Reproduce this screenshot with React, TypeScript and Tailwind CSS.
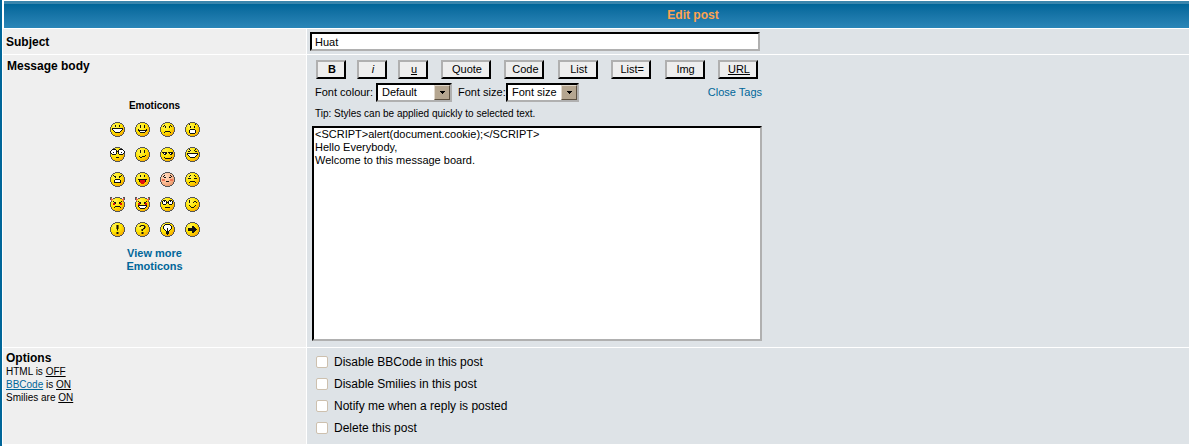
import React, { useState } from "react";

const INK: Record<string, string> = {
  K: "#111111",
  W: "#ffffff",
  R: "#e01010",
  G: "#555555",
  D: "#8a7000",
  P: "#f07858",
  O: "#e8604a",
};

const OUTLINE: string[] = [
  ".....GGGGG.....",
  "...GG.....GG...",
  "..G.........G..",
  ".G...........G.",
  ".G...........G.",
  "G.............G",
  "G.............G",
  "G.............G",
  "G.............G",
  "G.............G",
  ".G...........G.",
  ".G...........G.",
  "..G.........G..",
  "...GG.....GG...",
  ".....GGGGG.....",
];

type Face = { name: string; top: number; rows: string[]; blush?: boolean };

const FACES: Face[] = [
  { name: "Very Happy", top: 3, rows: [
    ".....K...K.....",
    ".....K...K.....",
    "...............",
    "..KKKKKKKKKKK..",
    "..KWWWWWWWWWK..",
    "...KWWWWWWWK...",
    "....KWWWWWK....",
    ".....KKKKK.....",
  ] },
  { name: "Smile", top: 3, rows: [
    ".....K...K.....",
    ".....K...K.....",
    ".....K...K.....",
    "...............",
    "...K.......K...",
    "...KKKKKKKKK...",
    "....KWWWWWK....",
    ".....KKKKK.....",
  ] },
  { name: "Sad", top: 3, rows: [
    "....K.....K....",
    "...K.K...K.K...",
    ".....K...K.....",
    "...............",
    "...............",
    "...............",
    ".....KKKKK.....",
    "....K.....K....",
  ] },
  { name: "Surprised", top: 2, rows: [
    "....K.....K....",
    "...............",
    ".....K...K.....",
    ".....K...K.....",
    "...............",
    ".....KKKKK.....",
    "....KWWWWWK....",
    "....KWWWWWK....",
    "....KWWWWWK....",
    ".....KKKKK.....",
  ] },
  { name: "Shocked", top: 2, rows: [
    "..KKKK...KKKK..",
    ".KWWWWK.KWWWWK.",
    "KWWWWWKKKWWWWWK",
    "KWWKWWK.KWWKWWK",
    ".KWWWWK.KWWWWK.",
    "..KKKK...KKKK..",
    "...............",
    "...............",
    "......KKK......",
  ] },
  { name: "Confused", top: 3, rows: [
    ".....K...K.....",
    ".....K...K.....",
    ".....K...K.....",
    "...............",
    "...............",
    "..........K....",
    "....K..KKK.....",
    ".....KK........",
  ] },
  { name: "Cool", top: 5, rows: [
    "..KKKKK.KKKKK..",
    "...KWKK..KWKK..",
    "....KK....KK...",
    "...............",
    "...............",
    "....K......K...",
    ".....KKKKKK....",
  ] },
  { name: "Laughing", top: 2, rows: [
    "....K.....K....",
    ".....K...K.....",
    "...KK.....KK...",
    "...............",
    "..KKKKKKKKKKK..",
    "..KWWWWWWWWWK..",
    "...KWWWWWWWK...",
    "....KWWWWWK....",
    ".....KKKKK.....",
  ] },
  { name: "Mad", top: 3, rows: [
    "...K.......K...",
    "....KK...KK....",
    ".....K...K.....",
    "...............",
    ".....KKKKK.....",
    "....KWWWWWK....",
    "....KWWWWWK....",
    "....KKKKKKK....",
  ] },
  { name: "Razz", top: 3, rows: [
    ".....K...K.....",
    ".....K...K.....",
    "...............",
    "...............",
    "...KKKKKKKKK...",
    "....KRRRRRK....",
    "....KRRRRRK....",
    ".....RRRRR.....",
    "......RRR......",
  ] },
  { name: "Embarrassed", top: 3, blush: true, rows: [
    "....K.....K....",
    "...K.......K...",
    "....KK...KK....",
    "...............",
    "..PPP.....PPP..",
    "..PPP.....PPP..",
    "......KKK......",
  ] },
  { name: "Crying or Very sad", top: 3, rows: [
    ".....K...K.....",
    "....K.....K....",
    "...............",
    "...KKK...KKK...",
    "...............",
    "...............",
    ".....KKKKK.....",
    "....K.....K....",
  ] },
  { name: "Evil or Very Mad", top: 0, rows: [
    "GG...........GG",
    "GO...........OG",
    "GOO.........OOG",
    ".O...........O.",
    "...K.......K...",
    "....KK...KK....",
    "...RRK...KRR...",
    "...RR.....RR...",
    "...............",
    ".....KKKKK.....",
    "....K.....K....",
  ] },
  { name: "Twisted Evil", top: 0, rows: [
    "GG...........GG",
    "GO...........OG",
    "GOO.........OOG",
    ".O...........O.",
    "...K.......K...",
    "....KK...KK....",
    "...RRK...KRR...",
    "...RR.....RR...",
    "...KKKKKKKKK...",
    "...KWWWWWWWK...",
    "....KWWWWWK....",
    ".....KKKKK.....",
  ] },
  { name: "Rolling Eyes", top: 3, rows: [
    "...KKK...KKK...",
    "..KWKWK.KWKWK..",
    "..KWWWKKKWWWK..",
    "..KWWWK.KWWWK..",
    "...KKK...KKK...",
    "...............",
    "...............",
    ".....KKKKK.....",
  ] },
  { name: "Wink", top: 3, rows: [
    "....K..........",
    "....K....KK....",
    "....K...K..K...",
    "...............",
    "...............",
    "....K.....K....",
    ".....K...K.....",
    "......KKK......",
  ] },
  { name: "Exclamation", top: 3, rows: [
    "......DKD......",
    "......DKD......",
    "......DKD......",
    "......DKD......",
    ".......K.......",
    ".......D.......",
    "...............",
    "......DKD......",
    "......DKD......",
  ] },
  { name: "Question", top: 3, rows: [
    ".....DKKKD.....",
    "....DK...KD....",
    ".........KD....",
    "........KK.....",
    "......DKD......",
    "......DK.......",
    "...............",
    "......DKD......",
    "......DKD......",
  ] },
  { name: "Idea", top: 2, rows: [
    ".....KKKKK.....",
    "....KWWWWWK....",
    "...KWWWWWWWK...",
    "...KWWWWWWWK...",
    "...KWWWKWWWK...",
    "....KWWKWWK....",
    ".....KWKWK.....",
    "......KKK......",
    "......KKK......",
    "......KKK......",
    ".......K.......",
  ] },
  { name: "Arrow", top: 4, rows: [
    ".......KK......",
    ".......KKK.....",
    "...KKKKKKKK....",
    "...KKKKKKKKK...",
    "...KKKKKKKK....",
    ".......KKK.....",
    ".......KK......",
  ] },
];

function pixels(rows: string[], top: number) {
  return rows.flatMap((row, y) =>
    row.split("").map((c, x) =>
      c === "." ? null : (
        <rect key={`${x}-${y}`} x={x} y={y + top} width="1" height="1" fill={INK[c]} />
      ),
    ),
  );
}

function Smiley({ face }: { face: Face }) {
  return (
    <svg
      viewBox="0 0 15 15"
      className="block size-[15px]"
      shapeRendering="crispEdges"
      aria-hidden="true"
    >
      <path
        d="M5 0h5v1h2v1h1v1h1v2h1v5h-1v2h-1v1h-1v1h-2v1h-5v-1h-2v-1h-1v-1h-1v-2h-1v-5h1v-2h1v-1h1v-1h2z"
        fill={face.blush ? "url(#skin)" : "url(#sun)"}
      />
      {pixels(OUTLINE, 0)}
      {pixels(face.rows, face.top)}
    </svg>
  );
}

const SUNKEN = "border-2 border-t-black border-l-black border-r-[#b0b0b0] border-b-[#b0b0b0] bg-white";

function TagButton({ label, className }: { label: string; className: string }) {
  return (
    <button
      type="button"
      className={`h-[19px] border-2 border-t-[#b0b0b0] border-l-[#b0b0b0] border-r-black border-b-black bg-[#eeeeee] pl-[2px] text-center text-[11px] leading-[15px] ${className}`}
    >
      {label}
    </button>
  );
}

function Picker({ id, options, className }: { id: string; options: string[]; className: string }) {
  return (
    <span className={`relative inline-block h-[19px] ${className}`}>
      <select
        id={id}
        className={`block h-[19px] w-full appearance-none pl-1 text-[11px] leading-[15px] outline-none ${SUNKEN}`}
      >
        {options.map((o) => (
          <option key={o}>{o}</option>
        ))}
      </select>
      <span className="pointer-events-none absolute top-[2px] right-[2px] flex h-[15px] w-[16px] items-center justify-center border border-t-[#e0d8cc] border-l-[#e0d8cc] border-r-[#5c5040] border-b-[#5c5040] bg-[#b5a690]">
        <svg viewBox="0 0 5 3" className="h-[3px] w-[5px]" shapeRendering="crispEdges" aria-hidden="true">
          <path d="M0 0h5v1h-1v1h-1v1h-1v-1h-1v-1h-1z" fill="#000" />
        </svg>
      </span>
    </span>
  );
}

const CHECKS = [
  "Disable BBCode in this post",
  "Disable Smilies in this post",
  "Notify me when a reply is posted",
  "Delete this post",
];

export default function App() {
  const [subject, setSubject] = useState("Huat");
  const [body, setBody] = useState(
    "<SCRIPT>alert(document.cookie);</SCRIPT>\nHello Everybody,\nWelcome to this message board.",
  );

  return (
    <form className="overflow-hidden border-l-2 border-[#006699] bg-white pt-px pb-[2px] pl-px font-['Liberation_Sans',Arial,sans-serif] text-[11px] leading-[13px] text-black">
      <svg className="absolute size-0" aria-hidden="true">
        <defs>
          <radialGradient id="sun" cx="0.35" cy="0.3" r="0.75">
            <stop offset="0" stopColor="#fff45a" />
            <stop offset="0.5" stopColor="#ffe600" />
            <stop offset="1" stopColor="#f5a000" />
          </radialGradient>
          <radialGradient id="skin" cx="0.35" cy="0.3" r="0.75">
            <stop offset="0" stopColor="#ffdcc0" />
            <stop offset="0.5" stopColor="#fcc09a" />
            <stop offset="1" stopColor="#e89060" />
          </radialGradient>
        </defs>
      </svg>

      <h1 className="ml-px h-[27px] border-t-[3px] border-[#3a86ad] bg-linear-to-b from-[#006699] to-[#2a86b8] pl-[193px] text-center text-[12px] leading-[22px] font-bold text-[#ffa34f]">
        Edit post
      </h1>

      <div className="mt-px grid grid-cols-[303px_1fr] gap-px">
        <div className="bg-[#efefef] px-[3px] pt-[7px] pb-[5px] text-[12px] font-bold">
          <label htmlFor="subject" className="block">
            Subject
          </label>
        </div>
        <div className="bg-[#dee3e7] p-[3px]">
          <input
            id="subject"
            type="text"
            value={subject}
            onChange={(e) => setSubject(e.target.value)}
            className={`block h-[19px] w-[450px] px-[3px] text-[11px] leading-[13px] outline-none ${SUNKEN}`}
          />
        </div>

        <div className="bg-[#efefef] px-1 pt-[5px]">
          <label htmlFor="message" className="block text-[12px] font-bold">
            Message body
          </label>
          <div className="flex flex-col items-center pt-[26px] text-center">
            <h2 className="text-[10px] font-bold">Emoticons</h2>
            <div className="mt-[10px] grid grid-cols-4 gap-[10px]">
              {FACES.map((face) => (
                <button key={face.name} type="button" aria-label={face.name}>
                  <Smiley face={face} />
                </button>
              ))}
            </div>
            <a href="#more" className="mt-[10px] w-20 font-bold text-[#006699]">
              View more Emoticons
            </a>
          </div>
        </div>
        <div className="bg-[#dee3e7] pt-[5px] pb-[6px] pl-[5px]">
          <div className="ml-1 flex w-[442px] justify-between">
            <div className="flex gap-[11px]">
              <TagButton label="B" className="w-[30px] font-bold" />
              <TagButton label="i" className="w-[30px] italic" />
              <TagButton label="u" className="w-[30px] underline" />
            </div>
            <div className="flex w-[317px] justify-between">
              <TagButton label="Quote" className="w-[50px]" />
              <TagButton label="Code" className="w-10" />
              <TagButton label="List" className="w-10" />
              <TagButton label="List=" className="w-10" />
              <TagButton label="Img" className="w-10" />
              <TagButton label="URL" className="w-10 underline" />
            </div>
          </div>

          <div className="mt-1 ml-[3px] flex w-[447px] items-center">
            <label htmlFor="colour" className="w-[61px] whitespace-nowrap">
              Font colour:
            </label>
            <Picker id="colour" options={["Default", "Dark Red", "Red", "Blue"]} className="w-[76px]" />
            <label htmlFor="size" className="ml-[6px] w-[48px] whitespace-nowrap">
              Font size:
            </label>
            <Picker id="size" options={["Font size", "Tiny", "Small", "Large"]} className="w-[73px]" />
            <a href="#close" className="ml-auto text-[#006699]">
              Close Tags
            </a>
          </div>

          <p className="mt-[5px] ml-[3px] text-[10px]">Tip: Styles can be applied quickly to selected text.</p>

          <textarea
            id="message"
            value={body}
            onChange={(e) => setBody(e.target.value)}
            className={`mt-[6px] block h-[215px] w-[450px] resize-none px-px text-[11px] leading-[13px] outline-none ${SUNKEN}`}
          />
        </div>

        <div className="bg-[#efefef] px-[3px] pt-[4px] text-[10px]">
          <h2 className="text-[12px] font-bold">Options</h2>
          <p>
            HTML is <u>OFF</u>
          </p>
          <p>
            <a href="#bbcode" className="text-[#006699] underline">
              BBCode
            </a>{" "}
            is <u>ON</u>
          </p>
          <p>
            Smilies are <u>ON</u>
          </p>
        </div>
        <div className="flex flex-col gap-[6px] bg-[#dee3e7] pt-[6px] pb-[8px] pl-[9px] text-[12px] leading-[16px]">
          {CHECKS.map((text) => (
            <label key={text} className="flex items-center gap-[6px]">
              <input
                type="checkbox"
                className="size-[12px] appearance-none rounded-[2px] border border-[#cdc0ae] bg-white checked:bg-[#006699]"
              />
              {text}
            </label>
          ))}
        </div>
      </div>
    </form>
  );
}
